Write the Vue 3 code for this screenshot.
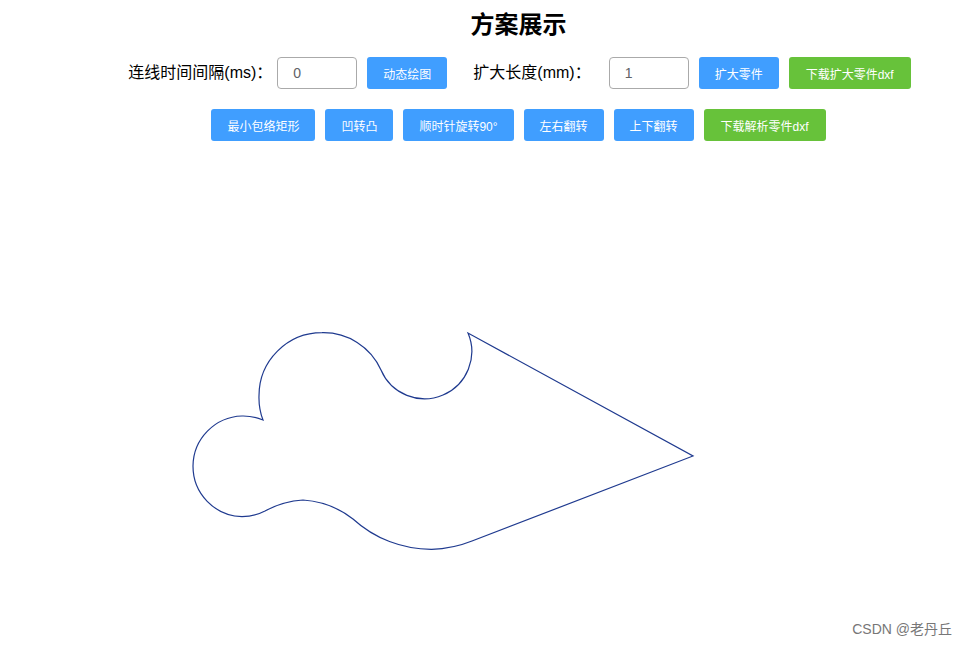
<script setup>
const topButtons = [
  { text: '扩大零件', type: 'primary' },
  { text: '下载扩大零件dxf', type: 'success' },
]

const toolButtons = [
  { text: '最小包络矩形', type: 'primary' },
  { text: '凹转凸', type: 'primary' },
  { text: '顺时针旋转90°', type: 'primary' },
  { text: '左右翻转', type: 'primary' },
  { text: '上下翻转', type: 'primary' },
  { text: '下载解析零件dxf', type: 'success' },
]

const partPath =
  'M468 333 A47 47 0 0 1 381 370 ' +
  'A63 63 0 0 0 322 332.7 A63 63 0 0 0 259 395.7 A63 63 0 0 0 263 420 ' +
  'A50.5 50.5 0 0 0 242 416 A50.5 50.5 0 0 0 193 466 A50.5 50.5 0 0 0 242 516.7 A50.5 50.5 0 0 0 265 511 ' +
  'A90 90 0 0 1 303 500 A90 90 0 0 1 353 519 ' +
  'A116 116 0 0 0 431.7 549.3 A116 116 0 0 0 472 541 L693 456 Z'
</script>

<template>
  <div class="page">
    <h2 class="title">方案展示</h2>

    <div class="row row-controls">
      <span class="label label-first">连线时间间隔(ms)：</span>
      <input class="num-input" type="text" value="0" />
      <button class="btn primary" type="button">动态绘图</button>
      <span class="label label-second">扩大长度(mm)：</span>
      <input class="num-input" type="text" value="1" />
      <button
        v-for="item in topButtons"
        :key="item.text"
        class="btn"
        :class="item.type"
        type="button"
      >
        {{ item.text }}
      </button>
    </div>

    <div class="row row-tools">
      <button
        v-for="item in toolButtons"
        :key="item.text"
        class="btn"
        :class="item.type"
        type="button"
      >
        {{ item.text }}
      </button>
    </div>

    <svg class="canvas" viewBox="70 141 897 504" width="897" height="504">
      <path :d="partPath" fill="none" stroke="#1f3a8f" stroke-width="1.2" />
    </svg>
  </div>

  <span class="watermark">CSDN @老丹丘</span>
</template>

<style scoped>
.page {
  width: 967px;
  height: 645px;
  box-sizing: border-box;
  padding-left: 70px;
  overflow: hidden;
  color: #000000;
  font-family: "Liberation Sans", "Noto Sans CJK SC", sans-serif;
}

.title {
  margin: 0;
  padding-top: 9px;
  height: 57px;
  box-sizing: border-box;
  font-size: 24px;
  line-height: 32px;
  font-weight: 700;
  text-align: center;
}

.row {
  display: flex;
  justify-content: center;
  align-items: center;
  gap: 10px;
  height: 32px;
}

.row-controls {
  padding-left: 2px;
}

.row-tools {
  margin-top: 20px;
}

.label {
  font-size: 16px;
  line-height: 32px;
  white-space: nowrap;
}

.label-first {
  margin-right: -5px;
}

.label-second {
  margin-left: 16px;
  margin-right: 8px;
}

.num-input {
  width: 80px;
  height: 32px;
  box-sizing: border-box;
  border: 1px solid #aaaaaa;
  border-radius: 4px;
  padding: 0 15px;
  color: #606266;
  background: #ffffff;
  font: inherit;
  font-size: 14px;
  outline: none;
}

.btn {
  height: 32px;
  border: 0;
  border-radius: 3px;
  padding: 0 16px;
  color: #ffffff;
  font: inherit;
  font-size: 12px;
  white-space: nowrap;
  cursor: pointer;
}

.primary {
  background: #409eff;
}

.success {
  padding: 0 17px;
  background: #67c23a;
}

.canvas {
  display: block;
}

.watermark {
  position: absolute;
  right: 15px;
  top: 619px;
  color: #777777;
  font-family: "Liberation Sans", "Noto Sans CJK SC", sans-serif;
  font-size: 14px;
  line-height: 20px;
  white-space: nowrap;
}
</style>
